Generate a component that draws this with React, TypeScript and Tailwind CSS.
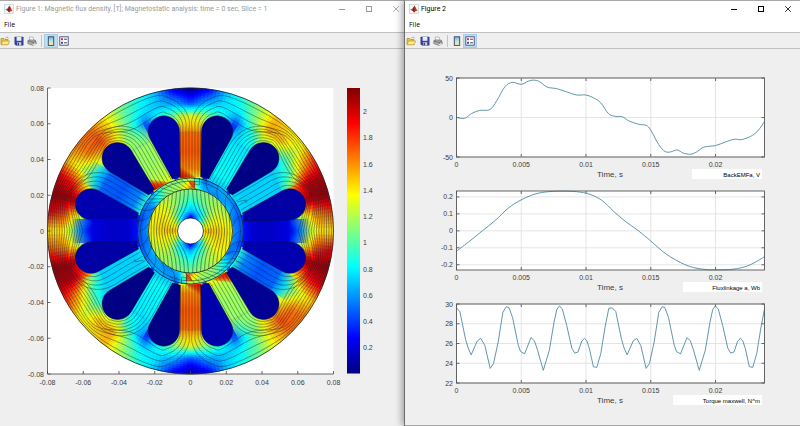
import { ReactNode } from "react";

type Pt = [number, number];

const B_MAX = 2.177;

// jet colour map, value in tesla
function jet(v: number) {
  const x = v / B_MAX;
  const ch = (c: number) =>
    Math.round(255 * Math.max(0, Math.min(1, 1.5 - Math.abs(4 * x - c))));
  return `rgb(${ch(3)},${ch(2)},${ch(1)})`;
}

function polar(r: number, deg: number): Pt {
  const a = (deg * Math.PI) / 180;
  return [r * Math.cos(a), -r * Math.sin(a)];
}

const fmt = (p: Pt) => `${p[0].toFixed(2)} ${p[1].toFixed(2)}`;

// Catmull-Rom spline through the points
function smooth(pts: Pt[]) {
  let d = `M${fmt(pts[0])}`;
  for (let i = 0; i < pts.length - 1; i++) {
    const p0 = pts[Math.max(0, i - 1)];
    const p1 = pts[i];
    const p2 = pts[i + 1];
    const p3 = pts[Math.min(pts.length - 1, i + 2)];
    const c1: Pt = [p1[0] + (p2[0] - p0[0]) / 6, p1[1] + (p2[1] - p0[1]) / 6];
    const c2: Pt = [p2[0] - (p3[0] - p1[0]) / 6, p2[1] - (p3[1] - p1[1]) / 6];
    d += `C${fmt(c1)} ${fmt(c2)} ${fmt(p2)}`;
  }
  return d;
}

function straight(pts: Pt[]) {
  return "M" + pts.map(fmt).join("L");
}

/* ---------- flux density data, 0..180 deg ---------- */

const YOKE_RADII = [100, 115, 128, 143];
const YOKE = [
  [0.3, 1.05, 1.4, 1.4],
  [0.9, 1.3, 1.6, 1.75],
  [1.8, 1.95, 2.08, 2.12],
  [1.4, 1.75, 2.05, 2.05],
  [0.65, 1.05, 1.5, 1.8],
  [0.4, 0.9, 1.2, 1.4],
  [0.9, 1.15, 1.5, 1.4],
  [1.0, 1.2, 1.55, 1.5],
  [0.75, 0.85, 1.1, 1.2],
  [0.3, 0.35, 0.78, 0.95],
  [0.7, 0.95, 0.78, 0.72],
  [1.1, 1.15, 0.7, 0.25],
  [1.5, 1.3, 0.42, 0.02],
  [1.1, 1.15, 0.65, 0.22],
  [0.8, 1.0, 0.7, 0.7],
  [0.35, 0.4, 0.78, 0.9],
  [1.1, 0.95, 1.0, 1.1],
  [1.2, 1.3, 1.4, 1.4],
  [1.5, 1.6, 1.75, 1.65],
  [0.9, 1.35, 1.65, 1.65],
  [0.5, 1.05, 1.3, 1.5],
  [1.1, 1.5, 1.85, 2.0],
  [1.8, 2.0, 2.1, 2.12],
  [0.9, 1.35, 1.75, 1.95],
  [0.3, 1.05, 1.4, 1.4],
];

const RING_RADII = [42, 53];
const RING = [
  [0.6, 0.45],
  [0.55, 0.45],
  [0.7, 0.5],
  [0.6, 0.65],
  [0.55, 0.65],
  [0.7, 0.5],
  [1.6, 1.2],
  [1.2, 1.1],
  [1.15, 1.1],
  [0.95, 0.7],
  [0.5, 0.6],
  [0.6, 0.4],
  [0.6, 0.45],
];

const ROTOR_RADII = [12, 20, 30, 42];
const ROTOR = [
  [1.5, 1.5, 1.45, 1.35],
  [1.1, 1.25, 1.3, 1.2],
  [0.6, 0.8, 1.1, 1.15],
  [0.1, 0.65, 0.9, 1.1],
  [0.5, 0.9, 1.15, 1.2],
  [1.1, 1.3, 1.4, 1.35],
  [1.5, 1.5, 1.45, 1.35],
];

function sample(table: number[][], radii: number[], deg: number, r: number) {
  const step = 180 / (table.length - 1);
  const a = Math.min(table.length - 1.001, deg / step);
  const i = Math.floor(a);
  let j = 0;
  while (j < radii.length - 2 && r > radii[j + 1]) j++;
  const fr = Math.max(0, Math.min(1, (r - radii[j]) / (radii[j + 1] - radii[j])));
  const fa = a - i;
  const lo = table[i][j] * (1 - fr) + table[i][j + 1] * fr;
  const hi = table[i + 1][j] * (1 - fr) + table[i + 1][j + 1] * fr;
  return lo * (1 - fa) + hi * fa;
}

type FieldProps = {
  table: number[][];
  radii: number[];
  dr: number;
  da: number;
};

// the field repeats after half a turn
function Field({ table, radii, dr, da }: FieldProps) {
  const cells: ReactNode[] = [];
  const outer = radii[radii.length - 1];
  for (let r = radii[0]; r < outer; r += dr) {
    const r2 = Math.min(outer, r + dr);
    for (let a = 0; a < 360; a += da) {
      const color = jet(sample(table, radii, (a + da / 2) % 180, (r + r2) / 2));
      cells.push(
        <path
          key={`${r}-${a}`}
          d={straight([polar(r, a), polar(r2, a), polar(r2, a + da), polar(r, a + da)]) + "Z"}
          fill={color}
          stroke={color}
          strokeWidth={0.5}
        />
      );
    }
  }
  return <g>{cells}</g>;
}

/* ---------- machine geometry ---------- */

const teeth = [
  { angle: 0, stops: [0.3, 0.2, 0.15, 0.17, 0.3] },
  { angle: 30, stops: [0.9, 0.72, 0.72, 0.72, 0.75] },
  { angle: 60, stops: [0.8, 0.78, 0.8, 0.82, 0.7] },
  { angle: 90, stops: [1.45, 1.68, 1.72, 1.62, 1.3] },
  { angle: 120, stops: [1.1, 1.15, 1.15, 1.2, 1.35] },
  { angle: 150, stops: [0.7, 0.48, 0.45, 0.55, 0.9] },
];

const slots = [
  { angle: 15, v: 0.08 },
  { angle: 45, v: 0.01 },
  { angle: 75, v: 0.01 },
  { angle: 105, v: 0.09 },
  { angle: 135, v: 0.04 },
  { angle: 165, v: 0.1 },
];

const TOOTH_LINES = [
  [1.5, 4.5, 7.5, 10],
  [-9, -5.5, -2, 1.5, 5, 8.5],
  [-8, -3, 2, 7],
];

// flux lines of one quadrant, running from each tooth round the yoke to 0 deg
function quadrantLines() {
  const counts = [4, 10, 14];
  const paths: string[] = [];
  let rank = 0;
  TOOTH_LINES.forEach((offsets, k) => {
    const theta = 90 - 30 * k;
    offsets.forEach((o) => {
      const n = rank++;
      const spread = (slot: number, depth: number) =>
        142.5 - ((n + 0.5) / counts[slot]) * depth;
      const axis = polar(1, theta);
      const side = polar(1, theta - 90);
      const pts: Pt[] = [54, 76].map((r) => [axis[0] * r + side[0] * o, axis[1] * r + side[1] * o]);
      const cap = polar(103, theta - 15);
      for (let t = 0; t <= 1; t += 0.25) {
        const d = (26.6 - o) * (1 - t) + (spread(k, 23.5) - 103) * t;
        const p = polar(d, theta + 90 - 105 * t);
        pts.push([cap[0] + p[0], cap[1] + p[1]]);
      }
      for (let m = k + 1; m < 3; m++) {
        pts.push(polar(spread(m - 1, 29), 90 - 30 * m));
        pts.push(polar(spread(m, 23.5), 75 - 30 * m));
      }
      pts.push(polar(spread(2, 36), 0));
      paths.push(smooth(pts));
    });
  });
  return paths;
}

const yokeLines = quadrantLines();

function rotorLines() {
  const paths: string[] = [];
  for (let a = -38; a <= 38; a += 4) {
    const end = Math.sqrt(42 * 42 - a * a);
    const sign = a < 0 ? -1 : 1;
    const pts: Pt[] = [];
    for (let i = -6; i <= 6; i++) {
      const y = (end * i) / 6;
      const push = sign * 14 * (1 - Math.abs(a) / 42) * Math.exp(-((y / 19) ** 2));
      pts.push([a + push, y]);
    }
    paths.push(smooth(pts));
  }
  return paths;
}

const coreLines = rotorLines();
const magnetLines = [82, 88, 94, 100, 106, 112, 118, 124, 130, 136];
const gapLines = [6, 20, 34, 48, 62, 146, 158, 170];

function TeethAndSlots() {
  return (
    <g>
      {teeth.map((t) => (
        <rect
          key={t.angle}
          x={-12}
          y={-120}
          width={24}
          height={68}
          fill={`url(#tooth${t.angle})`}
          transform={`rotate(${90 - t.angle})`}
        />
      ))}
      {/* saturated tooth tips */}
      <path d="M-11 -66V-53H6Z" fill="url(#hot)" />
      <path d="M-11 -66V-53H6Z" fill="url(#hot)" transform="rotate(-30)" />
      {slots.map((s) => (
        <path
          key={s.angle}
          d="M-4 -55L-15.07 -99A15.6 15.6 0 1 1 15.07 -99L4 -55Z"
          fill={jet(s.v)}
          stroke="#04103a"
          strokeWidth={0.5}
          transform={`rotate(${90 - s.angle})`}
        />
      ))}
    </g>
  );
}

function FluxLines() {
  return (
    <g fill="none" stroke="#10202a" strokeWidth={0.55} opacity={0.75}>
      {yokeLines.map((d, i) => (
        <path key={i} d={d} />
      ))}
      {yokeLines.map((d, i) => (
        <path key={i} d={d} transform="scale(-1 1)" />
      ))}
      {magnetLines.map((a) => (
        <path key={a} d={straight([polar(42, a), polar(53, a + 13)])} />
      ))}
      {gapLines.map((a) => (
        <path key={a} d={smooth([polar(42, a), polar(47, a + 8), polar(54, a + 11)])} />
      ))}
      <path d="M4 -53v11M9 -53v7l-6 -1M-22 -54l4 -3 6 1M47 -29l8 -2 1 3M-46 -30l-7 -3" />
    </g>
  );
}

const FigureText = "fill-[#3c3c3c] font-['Liberation_Sans',Arial,sans-serif] text-[7px]";

function FluxPlot() {
  const ticks = [-0.08, -0.06, -0.04, -0.02, 0, 0.02, 0.04, 0.06, 0.08];
  const barTicks = [0.2, 0.4, 0.6, 0.8, 1, 1.2, 1.4, 1.6, 1.8, 2];
  const barStops = Array.from({ length: 33 }, (_, i) => i / 32);

  return (
    <svg viewBox="0 49 404 377" className="block w-full" role="img" aria-label="Magnetic flux density">
      <defs>
        {teeth.map((t) => (
          <linearGradient key={t.angle} id={`tooth${t.angle}`} x1="0" y1="0" x2="0" y2="1">
            <stop offset="0" stopColor={jet(t.stops[0])} stopOpacity="0" />
            <stop offset="0.15" stopColor={jet(t.stops[0])} stopOpacity="0.5" />
            <stop offset="0.35" stopColor={jet(t.stops[1])} />
            <stop offset="0.6" stopColor={jet(t.stops[2])} />
            <stop offset="0.85" stopColor={jet(t.stops[3])} />
            <stop offset="1" stopColor={jet(t.stops[4])} />
          </linearGradient>
        ))}
        <linearGradient id="hot" x1="0" y1="1" x2="0.6" y2="0.3">
          <stop offset="0" stopColor="#c80000" />
          <stop offset="0.5" stopColor="#f02800" stopOpacity="0.9" />
          <stop offset="1" stopColor="#ff8000" stopOpacity="0" />
        </linearGradient>
        <linearGradient id="bar" x1="0" y1="1" x2="0" y2="0">
          {barStops.map((s) => (
            <stop key={s} offset={s} stopColor={jet(s * B_MAX)} />
          ))}
        </linearGradient>
      </defs>

      <rect x={47.5} y={88} width={286} height={286} fill="#fff" />
      <g transform="translate(190.5 231)">
        <circle r={142} fill={jet(0.35)} />
        <Field table={YOKE} radii={YOKE_RADII} dr={2} da={1.5} />
        <TeethAndSlots />
        <g transform="rotate(180)">
          <TeethAndSlots />
        </g>
        <Field table={RING} radii={RING_RADII} dr={3} da={3} />
        <Field table={ROTOR} radii={ROTOR_RADII} dr={2} da={4} />
        <path
          d="M-2 -50L5 -49.5L4 -42L1 -43ZM2 50L-5 49.5L-4 42L-1 43Z"
          fill="#e83a10"
          opacity={0.85}
        />
        <FluxLines />
        <g transform="rotate(180)">
          <FluxLines />
        </g>
        <g fill="none" stroke="#10202a" strokeWidth={0.55} opacity={0.9}>
          {coreLines.map((d, i) => (
            <path key={i} d={d} />
          ))}
        </g>
        <g fill="none" stroke="#152028" strokeWidth={0.8}>
          <circle r={143} />
          <circle r={53} />
          <circle r={50} strokeWidth={0.5} />
          <circle r={42} />
          <circle r={13} fill="#fff" />
        </g>
      </g>

      <path d="M47.5 88V374H333.5" fill="none" stroke="#444" strokeWidth={0.8} />
      {ticks.map((t) => {
        const p = t * 1787.5;
        return (
          <g key={t} className={FigureText}>
            <path d={`M${190.5 + p} 374v-3M47.5 ${231 - p}h3`} stroke="#444" strokeWidth={0.8} />
            <text x={190.5 + p} y={385} textAnchor="middle">
              {t}
            </text>
            <text x={44} y={233.5 - p} textAnchor="end">
              {t}
            </text>
          </g>
        );
      })}

      <rect x={347} y={88} width={13} height={285.5} fill="url(#bar)" />
      {barTicks.map((t) => (
        <text key={t} x={363} y={376.5 - t * 131.2} className={FigureText}>
          {t}
        </text>
      ))}
    </svg>
  );
}

/* ---------- time plots ---------- */

const backEmf: Pt[] = [
  [0, 0], [0.64, -1], [1.16, 5], [1.8, 9], [2.58, 10], [3.1, 21], [3.74, 39], [4.33, 44.5],
  [4.98, 42], [5.54, 46], [5.93, 47.3], [6.4, 45.5], [7, 38.5], [7.74, 36.5], [8.5, 32.5],
  [9.28, 28.5], [9.98, 28.5], [10.57, 25], [11.14, 18.5], [11.73, 5], [12.25, 1.5], [12.8, 1],
  [13.28, -4], [14.05, -8.5], [14.65, -10], [15, -16], [15.6, -34], [16.1, -43], [16.55, -43.5],
  [17.04, -41], [17.5, -45], [18.05, -46.5], [18.5, -44], [19.1, -37.5], [20, -35.5],
  [20.76, -31], [21.45, -27.5], [22, -28], [22.7, -24], [23.26, -17], [23.78, -5],
];

const fluxLinkage: Pt[] = [
  [0, -0.12], [1.03, -0.06], [1.99, 0], [2.97, 0.06], [4, 0.134], [4.98, 0.182], [6.06, 0.217],
  [7.09, 0.231], [8.12, 0.234], [9.28, 0.231], [10.31, 0.215], [11.22, 0.18], [12.12, 0.116],
  [13.02, 0.057], [14.05, 0], [15, -0.06], [15.99, -0.126], [17.02, -0.176], [18.05, -0.211],
  [19.08, -0.227], [20, -0.23], [21.15, -0.228], [22.18, -0.214], [22.95, -0.19], [23.78, -0.152],
];

// one period of the torque ripple
const TORQUE_PERIOD = 12.04;
const torquePeriod: Pt[] = [
  [0, 29.6], [0.26, 29.23], [0.7, 26.42], [0.9, 25.55], [1.13, 24.85], [1.6, 26.25],
  [1.88, 26.52], [2.19, 25.79], [2.6, 23.48], [2.86, 23.98], [3.22, 26.15], [3.58, 29.16],
  [3.84, 29.73], [4.05, 29.63], [4.33, 28.63], [4.77, 25.82], [4.95, 25.18], [5.26, 24.95],
  [5.75, 26.59], [6.01, 26.29], [6.24, 25.42], [6.7, 23.28], [7.17, 25.32], [7.53, 28.16],
  [7.74, 29.43], [7.94, 29.8], [8.17, 29.5], [8.51, 27.83], [8.9, 25.55], [9.13, 25.02],
  [9.39, 25.15], [9.67, 26.25], [9.88, 26.52], [10.06, 26.29], [10.26, 25.48], [10.57, 23.65],
  [10.83, 23.58], [11.14, 24.98], [11.47, 27.66], [11.76, 29.57],
];
const torque: Pt[] = [
  ...torquePeriod,
  ...torquePeriod.map(([t, v]): Pt => [t + TORQUE_PERIOD, v]).filter(([t]) => t < 23.7),
  [23.78, 29.5],
];

type TimePlotProps = {
  data: Pt[];
  min: number;
  max: number;
  yTicks: number[];
  label: string;
  labelX: number;
  curve?: (pts: Pt[]) => string;
};

function TimePlot({ data, min, max, yTicks, label, labelX, curve = smooth }: TimePlotProps) {
  const left = 51.5;
  const right = 359.5;
  const top = 12;
  const bottom = 91;
  const px = (t: number) => left + (t / 23.78) * (right - left);
  const py = (v: number) => bottom - ((v - min) / (max - min)) * (bottom - top);

  return (
    <svg viewBox="0 0 395 113" className="block w-full" role="img" aria-label={label}>
      <rect x={left} y={top} width={right - left} height={bottom - top} fill="#fff" />
      {[0, 5, 10, 15, 20].map((t) => (
        <g key={t} className={FigureText}>
          <path d={`M${px(t)} ${top}V${bottom}`} stroke="#dedede" strokeWidth={0.8} />
          <path d={`M${px(t)} ${top}v3M${px(t)} ${bottom}v-3`} stroke="#444" strokeWidth={0.8} />
          <text x={px(t)} y={101} textAnchor="middle">
            {t / 1000}
          </text>
        </g>
      ))}
      {yTicks.map((v) => (
        <g key={v} className={FigureText}>
          <path d={`M${left} ${py(v)}H${right}`} stroke="#dedede" strokeWidth={0.8} />
          <path d={`M${left} ${py(v)}h3M${right} ${py(v)}h-3`} stroke="#444" strokeWidth={0.8} />
          <text x={48} y={py(v) + 2.5} textAnchor="end">
            {v}
          </text>
        </g>
      ))}
      <path
        d={curve(data.map(([t, v]): Pt => [px(t), py(v)]))}
        fill="none"
        stroke="#4f8aa3"
        strokeWidth={0.9}
      />
      <rect
        x={left}
        y={top}
        width={right - left}
        height={bottom - top}
        fill="none"
        stroke="#555"
        strokeWidth={0.9}
      />
      <text
        x={205}
        y={111}
        textAnchor="middle"
        className="fill-[#3c3c3c] font-['Liberation_Sans',Arial,sans-serif] text-[8px]"
      >
        Time, s
      </text>
      <rect x={labelX} y={103} width={357 - labelX} height={10} fill="#fff" />
      <text
        x={355}
        y={111}
        textAnchor="end"
        className="fill-black font-['Liberation_Sans',Arial,sans-serif] text-[6px]"
      >
        {label}
      </text>
    </svg>
  );
}

/* ---------- window chrome ---------- */

function MatlabIcon() {
  return (
    <svg viewBox="0 0 10 10" className="size-[10px]">
      <rect x="0.5" y="0.5" width="9" height="9" fill="#f7f7f7" stroke="#c4ccd2" strokeWidth="0.7" />
      <path d="M1.2 5.8L3.4 4.6L5.3 2.2L4.4 7L3 6.4Z" fill="#3f6f9c" />
      <path d="M3 6.4C4.2 5.2 4.6 2.2 5.6 1.8C6.6 2.4 7.4 5.8 8.8 7.4C7.4 6.6 6.4 7 5.2 8.6C4.6 7.4 4 6.6 3 6.4Z" fill="#c23a1a" />
      <path d="M5.6 1.8C5.5 4 5.8 6 5.2 8.6C4.6 7.4 4.2 6.8 3.6 6.4C4.6 5 4.8 2.4 5.6 1.8Z" fill="#6b2418" />
    </svg>
  );
}

function OpenIcon() {
  return (
    <svg viewBox="0 0 10 10" className="size-[10px]">
      <path d="M1 8.5V2.5H4L5 3.5H8V8.5Z" fill="#e8c33c" stroke="#9a7a14" strokeWidth="0.6" />
      <path d="M1 8.8L2.6 5H9.6L8 8.8Z" fill="#ffe987" stroke="#b8921e" strokeWidth="0.6" />
      <path d="M5.5 2C6.5 0.8 8 1 8.6 2.4" fill="none" stroke="#7f8a52" strokeWidth="0.6" />
    </svg>
  );
}

function SaveIcon() {
  return (
    <svg viewBox="0 0 10 10" className="size-[10px]">
      <path d="M0.8 1H9.2V9.2H1.8L0.8 8.2Z" fill="#3b459c" stroke="#272f78" strokeWidth="0.5" />
      <rect x="2.6" y="1" width="4.8" height="3.8" fill="#e6ebfa" />
      <rect x="3" y="6.2" width="4.2" height="3" fill="#c9cde0" />
      <rect x="3.6" y="6.8" width="1.3" height="2.4" fill="#272f78" />
    </svg>
  );
}

function PrintIcon() {
  return (
    <svg viewBox="0 0 10 10" className="size-[10px]">
      <path d="M2 4.5L2.6 1H5.8L7 4.5Z" fill="#fff" stroke="#8a8a8a" strokeWidth="0.6" />
      <path d="M0.8 4.8L3 3.8L8.4 4.2L9.2 6.4V8L6 9.4L0.8 7.6Z" fill="#a9abae" stroke="#636569" strokeWidth="0.6" />
      <path d="M0.9 5L6.2 6.4L9 5.4M6.2 6.4V9.2" fill="none" stroke="#55575b" strokeWidth="0.6" />
      <path d="M5 8.4L8 7.2L9.4 8.2L6.6 9.6Z" fill="#e7edc8" />
    </svg>
  );
}

function ColorbarIcon() {
  return (
    <svg viewBox="0 0 10 10" className="size-[10px]">
      <defs>
        <linearGradient id="barIcon" x1="0" y1="0" x2="0" y2="1">
          <stop offset="0" stopColor="#6fb5e8" />
          <stop offset="0.5" stopColor="#bfe3cf" />
          <stop offset="1" stopColor="#f4efb0" />
        </linearGradient>
      </defs>
      <rect x="2.3" y="0.8" width="5.4" height="8.6" fill="url(#barIcon)" stroke="#354468" strokeWidth="0.9" />
    </svg>
  );
}

function LegendIcon() {
  return (
    <svg viewBox="0 0 10 10" className="size-[10px]">
      <rect x="0.8" y="0.8" width="8.4" height="8.4" fill="#fff" stroke="#3e4a80" strokeWidth="0.9" />
      <rect x="2" y="2.2" width="2" height="2" fill="#cf3a3a" />
      <rect x="2" y="5.8" width="2" height="2" fill="#3a4fd0" />
      <path d="M5 3.2H8M5 6.8H8" stroke="#333" strokeWidth="0.9" />
    </svg>
  );
}

type WindowProps = {
  title: string;
  active?: boolean;
  pressed: "colorbar" | "legend";
  children: ReactNode;
};

function FigureWindow({ title, active, pressed, children }: WindowProps) {
  const pressedClass = "bg-[#bfdcf1] outline outline-[#a5cdea]";
  return (
    <section
      className={`flex min-w-0 flex-col border-t border-t-[#a8a8a8] bg-[#efefef] ${
        active ? "relative border-l border-l-[#6c6c6c] shadow-[-2px_0_7px_rgba(0,0,0,0.35)]" : ""
      }`}
    >
      <header
        className={`flex h-4 items-center bg-white pl-1 ${
          active ? "pr-[7px] text-black" : "pr-[3px] text-[#999]"
        }`}
      >
        <MatlabIcon />
        <h1 className="ml-[2px] flex-1 truncate font-[Roboto,sans-serif] text-[7px] leading-[10px]">
          {title}
        </h1>
        <div className="flex gap-[17px]">
          <button aria-label="Minimize" className="size-[10px]">
            <svg viewBox="0 0 10 10" fill="none" stroke="currentColor">
              <path d="M2 5.5H8" />
            </svg>
          </button>
          <button aria-label="Maximize" className="size-[10px]">
            <svg viewBox="0 0 10 10" fill="none" stroke="currentColor">
              <rect x="2.5" y="2.5" width="5" height="5" />
            </svg>
          </button>
          <button aria-label="Close" className="size-[10px]">
            <svg viewBox="0 0 10 10" fill="none" stroke="currentColor" strokeWidth="0.8">
              <path d="M2.2 2.2L7.8 7.8M7.8 2.2L2.2 7.8" />
            </svg>
          </button>
        </div>
      </header>
      <nav className="flex h-[15px] items-center bg-white pl-1">
        <button className="text-[7px] leading-[10px] text-black">File</button>
      </nav>
      <div
        className={`flex h-[17px] items-center border-y border-[#c0c0c0] ${active ? "pl-px" : ""}`}
      >
        <button aria-label="Open">
          <OpenIcon />
        </button>
        <button aria-label="Save" className="ml-1">
          <SaveIcon />
        </button>
        <button aria-label="Print" className="ml-[3px]">
          <PrintIcon />
        </button>
        <span className="ml-1 h-3 w-px bg-[#c4c4c4]" />
        <button
          aria-label="Insert colorbar"
          aria-pressed={pressed === "colorbar"}
          className={`ml-[3px] px-px py-px ${pressed === "colorbar" ? pressedClass : ""}`}
        >
          <ColorbarIcon />
        </button>
        <button
          aria-label="Insert legend"
          aria-pressed={pressed === "legend"}
          className={`ml-px px-px py-px ${pressed === "legend" ? pressedClass : ""}`}
        >
          <LegendIcon />
        </button>
      </div>
      {children}
    </section>
  );
}

export default function App() {
  return (
    <main className="grid min-h-screen grid-cols-[404fr_396fr] overflow-hidden bg-[#efefef] font-['Open_Sans','Noto_Sans',sans-serif]">
      <FigureWindow
        title="Figure 1: Magnetic flux density, [T]; Magnetostatic analysis: time = 0 sec, Slice = 1"
        pressed="colorbar"
      >
        <FluxPlot />
      </FigureWindow>
      <FigureWindow title="Figure 2" active pressed="legend">
        <div className="flex flex-1 flex-col border-b border-[#a8a8a8] pt-[17px]">
          <TimePlot
            data={backEmf}
            min={-50}
            max={50}
            yTicks={[-50, 0, 50]}
            label="BackEMFa, V"
            labelX={287}
          />
          <TimePlot
            data={fluxLinkage}
            min={-0.231}
            max={0.235}
            yTicks={[-0.2, -0.1, 0, 0.1, 0.2]}
            label="Fluxlinkage a, Wb"
            labelX={278}
          />
          <TimePlot
            data={torque}
            min={22}
            max={30}
            yTicks={[22, 24, 26, 28, 30]}
            label="Torque maxwell, N^m"
            labelX={268}
            curve={straight}
          />
        </div>
      </FigureWindow>
    </main>
  );
}
